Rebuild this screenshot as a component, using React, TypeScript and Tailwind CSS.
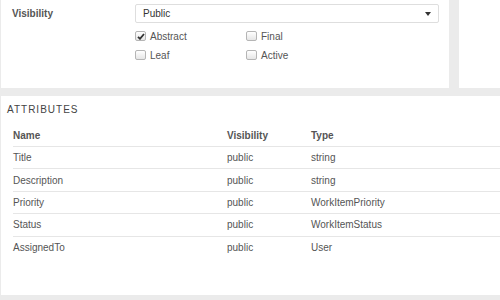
const attributes = [
  { name: "Title", visibility: "public", type: "string" },
  { name: "Description", visibility: "public", type: "string" },
  { name: "Priority", visibility: "public", type: "WorkItemPriority" },
  { name: "Status", visibility: "public", type: "WorkItemStatus" },
  { name: "AssignedTo", visibility: "public", type: "User" },
];

function Checkbox({ label, checked = false }: { label: string; checked?: boolean }) {
  return (
    <label className="flex items-center gap-[4px] h-[12px]">
      <span className="w-[11px] h-[10px] rounded-[2px] border border-[#b5b5b5] bg-gradient-to-b from-white to-[#e6e6e6] flex items-center justify-center">
        {checked && (
          <svg width="8" height="7" viewBox="0 0 8 7">
            <path d="M1 3.8 L3 5.8 L7 1" fill="none" stroke="#333" strokeWidth="1.8" />
          </svg>
        )}
      </span>
      <span className="text-[10px] text-[#555]">{label}</span>
    </label>
  );
}

export default function App() {
  return (
    <div
      className="w-[500px] h-[300px] overflow-hidden bg-[#ebebeb] flex flex-col gap-[8px] pl-[1px]"
      style={{ fontFamily: '"Liberation Sans", Arial, sans-serif' }}
    >
      {/* Top — properties + side panel */}
      <div className="flex gap-[10px] h-[88px] shrink-0">
        <div className="w-[448px] bg-white pt-[4px] pl-[11px] flex">
          <div className="w-[123px] h-[19px] flex items-center text-[10px] font-bold text-[#555]">
            Visibility
          </div>
          <div className="flex-1 pr-[10px]">
            <div className="h-[19px] border border-[#dedede] rounded-[2px] flex items-center justify-between pl-[7px] pr-[7px]">
              <span className="text-[10px] text-[#333]">Public</span>
              <svg width="6" height="4" viewBox="0 0 6 4">
                <path d="M0 0 H6 L3 4 Z" fill="#333" />
              </svg>
            </div>
            <div className="grid grid-cols-[111px_1fr] gap-y-[7px] mt-[7px]">
              <Checkbox label="Abstract" checked />
              <Checkbox label="Final" />
              <Checkbox label="Leaf" />
              <Checkbox label="Active" />
            </div>
          </div>
        </div>
        <div className="flex-1 bg-white" />
      </div>

      {/* Bottom — attributes table */}
      <div className="h-[199px] shrink-0 bg-white pt-[8px] pl-[6px]">
        <h2 className="text-[10px] leading-[12px] tracking-[1px] text-[#444]">ATTRIBUTES</h2>
        <div className="mt-[9px] ml-[6px]">
          <div className="grid grid-cols-[214px_84px_1fr] h-[22px] items-center border-b border-[#e6e6e6] text-[10px] font-bold text-[#555]">
            <span>Name</span>
            <span>Visibility</span>
            <span>Type</span>
          </div>
          {attributes.map((a, i) => (
            <div
              key={a.name}
              className={`grid grid-cols-[214px_84px_1fr] h-[22.4px] items-center text-[10px] text-[#555] ${
                i < attributes.length - 1 ? "border-b border-[#e6e6e6]" : ""
              }`}
            >
              <span>{a.name}</span>
              <span>{a.visibility}</span>
              <span>{a.type}</span>
            </div>
          ))}
        </div>
      </div>
    </div>
  );
}
